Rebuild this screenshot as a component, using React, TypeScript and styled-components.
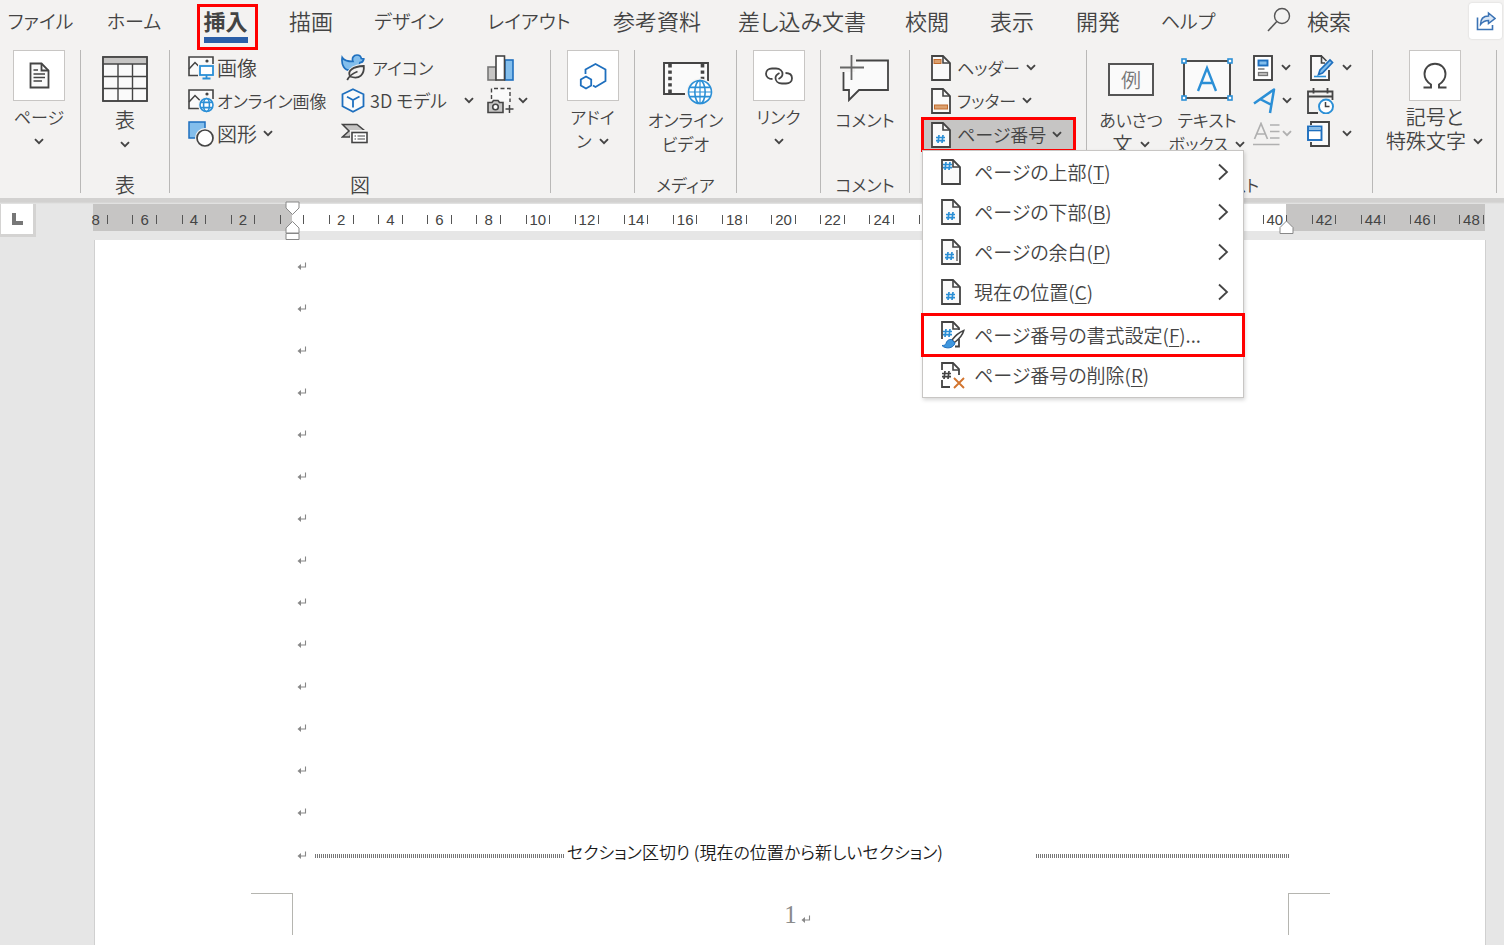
import React from "react";
import styled, { createGlobalStyle, css } from "styled-components";

const ink = "#444444";
const blue = "#2b8fd6";
const deep = "#1e6fbe";
const red = "#ff0000";

const GlobalStyle = createGlobalStyle`
  *, *::before, *::after { box-sizing: border-box; }
  body {
    margin: 0;
    background: #e6e6e6;
    color: ${ink};
    font-family: "Noto Sans CJK JP", "Noto Sans", sans-serif;
    font-weight: 350;
    font-feature-settings: "palt";
    overflow: hidden;
  }
  button {
    margin: 0;
    padding: 0;
    border: 0;
    background: none;
    color: inherit;
    font: inherit;
    font-feature-settings: inherit;
    white-space: nowrap;
  }
  svg { display: block; flex: none; fill: none; }
`;

const Window = styled.div`
  display: flex;
  flex-direction: column;
  min-height: 100vh;
`;

/* ---------- tabs ---------- */

const TabBar = styled.nav`
  display: flex;
  height: 44px;
  background: #f3f2f1;
`;

const Tab = styled.button<{ $width: number; $active?: boolean; $kana?: boolean }>`
  position: relative;
  flex: 0 0 ${(p) => p.$width}px;
  height: 44px;
  padding-bottom: ${(p) => (p.$kana ? 2 : 4)}px;
  font-size: ${(p) => (p.$kana ? 19 : 22)}px;
  line-height: 40px;
  ${(p) =>
    p.$active &&
    css`
      font-weight: 700;
      &::after {
        content: "";
        position: absolute;
        left: 50%;
        bottom: 1px;
        width: 44px;
        height: 6px;
        margin-left: -22px;
        background: #2b5fa8;
      }
    `}
`;

const Callout = styled.span`
  position: absolute;
  z-index: 2;
  top: 4px;
  left: 50%;
  width: 61px;
  height: 46px;
  margin-left: -29px;
  border: 3px solid ${red};
`;

const SearchButton = styled.button`
  display: flex;
  align-items: center;
  gap: 16px;
  margin-left: 29px;
  height: 44px;
  padding-bottom: 4px;
  font-size: 22px;
  line-height: 40px;
`;

const ShareButton = styled.button`
  display: flex;
  align-items: center;
  justify-content: center;
  width: 33px;
  height: 36px;
  margin: 3px 2px 0 auto;
  border-radius: 3px;
  background: #fff;
  box-shadow: 0 0 2px #ccc;
`;

/* ---------- ribbon ---------- */

const Ribbon = styled.div`
  display: flex;
  height: 154px;
  padding-top: 6px;
  background: #f3f2f1;
`;

const Group = styled.section<{ $width: number }>`
  position: relative;
  display: flex;
  flex-direction: column;
  flex: 0 0 ${(p) => p.$width}px;
  height: 143px;
  border-right: 1px solid #b9b8b7;
`;

const GroupBody = styled.div<{ $pad?: number; $gap?: number; $center?: boolean }>`
  display: flex;
  flex: 1;
  align-items: flex-start;
  justify-content: ${(p) => (p.$center ? "center" : "flex-start")};
  gap: ${(p) => p.$gap ?? 0}px;
  padding-left: ${(p) => p.$pad ?? 0}px;
`;

const Caption = styled.div<{ $kanji?: boolean }>`
  height: 20px;
  margin-bottom: -2px;
  font-size: ${(p) => (p.$kanji ? 20 : 17)}px;
  line-height: 20px;
  text-align: center;
`;

const BigButton = styled.button<{ $width?: number }>`
  display: flex;
  flex-direction: column;
  align-items: center;
  line-height: 24px;
  ${(p) => p.$width && css`width: ${p.$width}px;`}
`;

const IconBox = styled.span`
  display: flex;
  align-items: center;
  justify-content: center;
  width: 52px;
  height: 51px;
  margin-bottom: 4px;
  border: 1px solid #c8c6c4;
  background: #fff;
`;

const IconSlot = styled.span`
  display: flex;
  align-items: center;
  justify-content: center;
  width: 54px;
  height: 58px;
`;

const Line = styled.span<{ $size?: number }>`
  display: flex;
  align-items: center;
  justify-content: center;
  gap: 7px;
  height: 24px;
  font-size: ${(p) => p.$size ?? 17}px;
`;

const Stack = styled.div<{ $width?: number; $end?: number }>`
  display: flex;
  flex-direction: column;
  padding-top: 1px;
  padding-right: ${(p) => p.$end ?? 0}px;
  ${(p) => p.$width && css`width: ${p.$width}px;`}
`;

const SmallButton = styled.button<{ $size?: number; $gap?: number }>`
  display: flex;
  align-items: center;
  gap: ${(p) => p.$gap ?? 3}px;
  height: 33px;
  font-size: ${(p) => p.$size ?? 17}px;
  line-height: 33px;
`;

const Spread = styled.span`
  flex: 1;
`;

const Label = styled.span`
  padding-right: 3px;
`;

const MenuAnchor = styled.div`
  position: relative;
`;

const PressedButton = styled(SmallButton)`
  width: 155px;
  height: 35px;
  margin-left: -10px;
  padding-left: 7px;
  border: 3px solid ${red};
  background: #c6c5c4;
`;

/* ---------- drop-down menu ---------- */

const Menu = styled.div`
  position: absolute;
  z-index: 5;
  top: 33px;
  left: -9px;
  display: flex;
  flex-direction: column;
  width: 322px;
  padding: 1px 0 2px;
  border: 1px solid #c8c6c4;
  background: #fff;
  box-shadow: 1px 2px 4px rgba(0, 0, 0, 0.16);
`;

const MenuItem = styled.button<{ $marked?: boolean }>`
  display: flex;
  align-items: center;
  gap: 10px;
  height: 40px;
  padding: 0 14px 0 17px;
  font-size: 19px;
  line-height: 40px;
  text-align: left;
  u { text-underline-offset: 3px; text-decoration-thickness: 1px; }
  ${(p) =>
    p.$marked &&
    css`
      margin-top: 3px;
      outline: 3px solid ${red};
      outline-offset: -1px;
    `}
`;

const MenuIcon = styled.span`
  width: 24px;
  padding-left: 1px;
`;

const MenuText = styled.span`
  flex: 1;
`;

/* ---------- ruler ---------- */

const Shade = styled.div`
  height: 6px;
  background: linear-gradient(#d2d1d0, #d2d1d0 4px, #e6e6e6);
`;

const RulerRow = styled.div`
  display: flex;
  height: 36px;
`;

const TabStop = styled.button`
  display: flex;
  align-items: center;
  justify-content: center;
  width: 36px;
  height: 33px;
  margin-right: 55px;
  border: 3px solid #d4d3d2;
  border-left-width: 1px;
  border-top: 0;
  background: #fff;
`;

const RulerTrack = styled.div`
  position: relative;
  width: 1394px;
  height: 27px;
`;

const RulerClip = styled.div`
  height: 27px;
  overflow: hidden;
  background: linear-gradient(
    90deg,
    transparent 2px,
    #c6c5c4 2px,
    #c6c5c4 201px,
    #fff 201px,
    #fff 1195px,
    #c6c5c4 1195px
  );
`;

const RulerCells = styled.div`
  display: grid;
  grid-template-columns: repeat(29, 1fr);
  align-items: center;
  width: 1425px;
  height: 31px;
  margin-left: -20px;
`;

const RulerCell = styled.span`
  display: flex;
  justify-content: center;
  width: 50%;
  height: 9px;
  margin: 0 auto;
  border: solid #555;
  border-width: 0 1px;
  font-family: "Liberation Sans", sans-serif;
  font-weight: 400;
  font-size: 15px;
  line-height: 10px;
`;

const Marker = styled.svg<{ $left: number; $top: number }>`
  position: absolute;
  left: ${(p) => p.$left}px;
  top: ${(p) => p.$top}px;
`;

/* ---------- document ---------- */

const Sheet = styled.main`
  flex: 1;
  margin: 0 18px 0 94px;
  border: solid #d0d0d0;
  border-width: 0 1px;
  background: #fff;
`;

const Paragraph = styled.div`
  display: flex;
  align-items: center;
  height: 42px;
  margin: 0 196px 0 202px;
`;

const TextBody = styled.div`
  padding-top: 5px;
`;

const BreakLine = styled.span<{ $grow?: boolean }>`
  flex: ${(p) => (p.$grow ? "1" : "0 0 250px")};
  height: 4px;
  margin-top: 3px;
  background: repeating-linear-gradient(90deg, #777 0, #777 1px, #fff 1px, #fff 2px);
`;

const BreakText = styled.span`
  width: 471px;
  padding: 0 0 4px 2px;
  color: #1a1a1a;
  font-size: 17px;
  line-height: 26px;
  white-space: nowrap;
`;

const MarkSpace = styled.span`
  width: 18px;
  padding-top: 2px;
`;

const Footer = styled.div`
  display: flex;
  justify-content: space-between;
  margin: 18px 155px 0 156px;
`;

const Crop = styled.span<{ $side: "left" | "right" }>`
  width: 42px;
  height: 42px;
  border-top: 1px solid #b5b5b0;
  ${(p) => (p.$side === "left" ? "border-right" : "border-left")}: 1px solid #b5b5b0;
`;

const PageNumber = styled.span`
  display: flex;
  align-items: center;
  gap: 4px;
  padding-left: 14px;
  color: #8a8a8a;
  font-family: "Liberation Serif", serif;
  font-size: 25px;
  line-height: 44px;
  svg { margin-top: 8px; }
`;

/* ---------- icons ---------- */

const Chevron = ({ faint }: { faint?: boolean }) => (
  <svg width="10" height="7" viewBox="0 0 10 7">
    <path d="M1 1.2 5 5.2 9 1.2" stroke={faint ? "#b0b0b0" : "#444"} strokeWidth="1.9" />
  </svg>
);

const ChevronRight = () => (
  <svg width="12" height="18" viewBox="0 0 12 18">
    <path d="M2 1.5 10 9 2 16.5" stroke="#444" strokeWidth="1.8" />
  </svg>
);

const SearchIcon = () => (
  <svg width="24" height="26" viewBox="0 0 24 26">
    <circle cx="15" cy="9" r="7.5" stroke="#555" strokeWidth="1.4" />
    <path d="M9.8 14.5 1 24" stroke="#555" strokeWidth="1.6" />
  </svg>
);

const ShareIcon = () => (
  <svg width="20" height="20" viewBox="0 0 20 20" stroke="#3b73b5" strokeWidth="1.6">
    <path d="M1.5 6.500V18.500H16.500V14" />
    <path
      d="M4.500 13.500C4.500 8 7 5 12.500 5V2L19 7.500 12.500 12.500V9.500C9 9.500 6.500 11 4.500 13.500Z"
      fill="#d9e6f5"
      strokeWidth="1.5"
    />
  </svg>
);

const PageIcon = () => (
  <svg width="21" height="27" viewBox="0 0 21 27" stroke="#444" strokeWidth="1.8">
    <path d="M1.5 1.5H12.5L19.5 8.5V25.5H1.5Z" fill="#fafafa" />
    <path d="M12.5 1.5V8.5H19.5" />
    <path d="M4.5 8H9M4.5 12H16M4.5 15.5H16M4.5 19H13" strokeWidth="1.3" />
  </svg>
);

const TableIcon = () => (
  <svg width="46" height="46" viewBox="0 0 46 46" stroke="#444">
    <rect x="1" y="1" width="44" height="44" fill="#fafafa" />
    <rect x="1" y="1" width="44" height="7" fill="#c6c5c4" stroke="none" />
    <path d="M1 8H45M1 20.5H45M1 32.5H45M16 8V45M30.5 8V45" strokeWidth="1.4" />
    <rect x="1" y="1" width="44" height="44" strokeWidth="1.8" />
  </svg>
);

const PictureBase = () => (
  <>
    <path d="M11 19.5H1V1H25V10" stroke="#444" strokeWidth="1.6" fill="#fafafa" />
    <path d="M1 13 7 6.5 12 11.5" stroke="#444" strokeWidth="1.5" />
    <circle cx="19" cy="5" r="1.6" fill="#444" />
  </>
);

const ImageIcon = () => (
  <svg width="26" height="24" viewBox="0 0 26 24">
    <PictureBase />
    <path d="M10 8H26V22H10Z" fill="#f3f2f1" />
    <rect x="12" y="10" width="13" height="9" fill="#fff" stroke={blue} strokeWidth="1.8" />
    <path d="M18.5 19V22M14.5 22.5H22.5" stroke={blue} strokeWidth="1.8" />
  </svg>
);

const Globe = ({ cx, cy, r }: { cx: number; cy: number; r: number }) => (
  <g stroke={blue} strokeWidth="1.6">
    <circle cx={cx} cy={cy} r={r + 2} fill="#f3f2f1" stroke="none" />
    <circle cx={cx} cy={cy} r={r} fill="#fff" />
    <ellipse cx={cx} cy={cy} rx={r * 0.45} ry={r} />
    <path
      d={`M${cx - r * 0.88} ${cy - r * 0.4}H${cx + r * 0.88}M${cx - r * 0.88} ${cy + r * 0.4}H${cx + r * 0.88}`}
    />
  </g>
);

const OnlineImageIcon = () => (
  <svg width="26" height="24" viewBox="0 0 26 24">
    <PictureBase />
    <Globe cx={18.5} cy={16} r={6.5} />
  </svg>
);

const ShapesIcon = () => (
  <svg width="26" height="26" viewBox="0 0 26 26">
    <rect x="1" y="1" width="16" height="16" fill="#83beec" stroke={deep} strokeWidth="1.5" />
    <circle cx="17" cy="17" r="10" fill="#f3f2f1" />
    <circle cx="17" cy="17" r="8" fill="#fff" stroke="#444" strokeWidth="1.7" />
  </svg>
);

const DuckIcon = () => (
  <svg width="26" height="27" viewBox="0 0 26 27">
    <path
      d="M1.2 3.500C3 6.500 7 7.500 12 7.500 10.500 4 12.500 1 16 1 18.500 1 20 2.500 20.300 4.500L22.800 5C22.300 7.500 20.500 8.500 19 8.500 18.500 13 15 16.500 9 16.500 3.500 16.500 0 11 1.200 3.500Z"
      fill="#83beec"
      stroke={deep}
      strokeWidth="1.7"
    />
    <path d="M4 27C4 16 11 9.500 25 9.500V18C23 25 15 27 4 27Z" fill="#f3f2f1" />
    <path
      d="M9 22.500C6 16.500 12 12.500 22.800 12 23.500 20 19 26 9 22.500ZM6.200 26C8.500 21.500 12.500 19 16.500 17.500"
      stroke="#444"
      strokeWidth="1.8"
    />
  </svg>
);

const CubeIcon = () => (
  <svg width="24" height="25" viewBox="0 0 24 25" stroke={deep} strokeWidth="1.8">
    <path d="M12 1.2 22.500 6.200V18.200L12 23.800 1.500 18.200V6.200Z" fill="#fafafa" />
    <path d="M6 8.800 12 12 18.500 8.500M12 12V19.500" />
  </svg>
);

const SmartArtIcon = () => (
  <svg width="27" height="21" viewBox="0 0 27 21">
    <path d="M1.5 1.5H16L24 8H11L9 14H1.5L8 8Z" fill="#c6c5c4" stroke="#444" strokeWidth="1.5" />
    <rect x="9" y="7" width="18" height="14" fill="#f3f2f1" />
    <rect x="11" y="9.5" width="15" height="10" fill="#fff" stroke="#444" strokeWidth="1.6" />
    <path d="M13.5 13H15M16.5 13H24M13.5 16H15M16.5 16H24" stroke="#444" strokeWidth="1.2" />
  </svg>
);

const ChartIcon = () => (
  <svg width="27" height="26" viewBox="0 0 27 26" strokeWidth="1.6">
    <rect x="1" y="12" width="8" height="13" fill="#c6c5c4" stroke="#777" />
    <rect x="18" y="5" width="8" height="20" fill="#83beec" stroke={deep} />
    <rect x="9" y="1" width="8.5" height="24" fill="#fff" stroke="#444" />
  </svg>
);

const ScreenshotIcon = () => (
  <svg width="27" height="27" viewBox="0 0 27 27" stroke="#444">
    <path d="M4.5 12V1.5H23V15" strokeWidth="1.4" strokeDasharray="4 2.5" fill="#fafafa" />
    <path d="M1 15.5H5L6.5 13.5H11L12.5 15.5H16V25.5H1Z" fill="#c6c5c4" strokeWidth="1.6" />
    <circle cx="8.5" cy="20" r="2.8" strokeWidth="1.6" fill="#fff" />
    <path d="M22.5 18V26M18.5 22H26.5" strokeWidth="1.5" />
  </svg>
);

const AddInIcon = () => (
  <svg width="28" height="28" viewBox="0 0 28 28" stroke={deep} strokeWidth="1.8">
    <path d="M6.500 12V7.500L16.500 2 26.500 7.500V19L16.500 25 14 23.500" />
    <path d="M7 14.500 12.200 17.500V23.500L7 26.500 1.800 23.500V17.500Z" />
  </svg>
);

const VideoIcon = () => (
  <svg width="54" height="52" viewBox="-4 -8 54 52">
    <rect x="1" y="2" width="44" height="31" fill="#fafafa" />
    <path d="M22 33H1V2H45V20" stroke="#444" strokeWidth="1.9" />
    <path d="M7 3V33M39.5 3V20" stroke="#444" strokeWidth="3.6" strokeDasharray="3.4 3" />
    <Globe cx={37} cy={31} r={11.5} />
    <path d="M37 19.5V42.5M26 31H48" stroke={blue} strokeWidth="1.2" />
  </svg>
);

const LinkIcon = () => (
  <svg width="28" height="18" viewBox="0 0 28 18" stroke="#444" strokeWidth="1.8">
    <path d="M7.5 12C3.5 12 1 10 1 6.8S3.5 1.5 7 1.5H11C15 1.5 17.5 4 17.5 7S15.5 11 13.5 12" />
    <path d="M20.5 6C24.5 6 27 8 27 11.2S24.5 16.5 21 16.5H17C13 16.5 10.5 14 10.5 11S12.5 7 14.5 6" />
  </svg>
);

const CommentIcon = () => (
  <svg width="50" height="48" viewBox="1 1 50 48">
    <path d="M17 6.5H49V36H20L10 46V36H4.500V17" fill="#fafafa" stroke="#444" strokeWidth="1.8" />
    <path d="M3 5H16V18H3Z" fill="#f3f2f1" />
    <path d="M12.5 1V26M1 13.5H25" stroke="#666" strokeWidth="1.8" />
  </svg>
);

const DocShape = () => (
  <>
    <path d="M1 1H12L19 8V25H1Z" fill="#fafafa" stroke="#444" strokeWidth="1.8" />
    <path d="M12 1V8H19" stroke="#444" strokeWidth="1.6" />
  </>
);

const Hash = ({ x, y, color = blue }: { x: number; y: number; color?: string }) => (
  <path
    d={`M${x + 3} ${y}L${x + 2} ${y + 8}M${x + 7} ${y}L${x + 6} ${y + 8}M${x} ${y + 2.5}H${x + 9}M${x} ${y + 5.7}H${x + 9}`}
    stroke={color}
    strokeWidth="1.7"
  />
);

const HeaderIcon = () => (
  <svg width="20" height="26" viewBox="0 0 20 26">
    <DocShape />
    <rect x="3" y="4.5" width="7" height="4" fill="#dba06e" stroke="#c06a2c" />
  </svg>
);

const FooterIcon = () => (
  <svg width="20" height="26" viewBox="0 0 20 26">
    <DocShape />
    <rect x="3.5" y="17" width="13" height="4" fill="#dba06e" stroke="#c06a2c" />
  </svg>
);

const NumberIcon = ({ x = 5, y = 13, bar = false }: { x?: number; y?: number; bar?: boolean }) => (
  <svg width="20" height="26" viewBox="0 0 20 26">
    <DocShape />
    <Hash x={x} y={y} />
    {bar && <path d="M16 11V22" stroke="#444" strokeWidth="1.2" />}
  </svg>
);

const FormatNumberIcon = () => (
  <svg width="24" height="28" viewBox="0 0 24 28">
    <path d="M1 18V1H12L18 7V9M18 18V25.500H14" stroke="#444" strokeWidth="1.8" />
    <path d="M12 1V8H18" stroke="#444" strokeWidth="1.6" />
    <Hash x={2} y={8} />
    <path
      d="M22.800 9.500C18 11.500 14 15 11 19L13.500 21.500C17.500 18.500 21.500 14.500 22.800 9.500Z"
      fill="#fff"
      stroke="#444"
      strokeWidth="1.5"
    />
    <path
      d="M10.500 18.500C7 18 5.500 20.500 5 22.500 4.500 24 3 24.500 1 24.500 4 28 12.500 28 14 22Z"
      fill="#3f97de"
      stroke={deep}
      strokeWidth="1"
    />
  </svg>
);

const RemoveNumberIcon = () => (
  <svg width="24" height="27" viewBox="0 0 24 27">
    <path d="M1 8V1H12L18 7V13M1 18V25H9" stroke="#444" strokeWidth="1.8" />
    <path d="M12 1V8H18" stroke="#444" strokeWidth="1.6" />
    <Hash x={1} y={9} color="#444" />
    <path d="M13 16 23 26M23 16 13 26" stroke="#d2742e" strokeWidth="1.9" />
  </svg>
);

const GreetingFrame = styled.span`
  display: flex;
  align-items: center;
  justify-content: center;
  width: 46px;
  height: 33px;
  border: 2px solid #555;
  background: #fafafa;
  color: #777;
  font-size: 20px;
  line-height: 29px;
`;

const TextBoxIcon = () => (
  <svg width="52" height="43" viewBox="0 0 52 43">
    <rect x="3" y="3" width="46" height="37" fill="#fafafa" stroke="#444" strokeWidth="1.9" />
    <path d="M17 33 26 10 35 33M20 25H32" stroke={blue} strokeWidth="2.4" />
    <g fill="#fff" stroke={blue} strokeWidth="1.6">
      <rect x="1" y="1" width="4" height="4" />
      <rect x="47" y="1" width="4" height="4" />
      <rect x="1" y="38" width="4" height="4" />
      <rect x="47" y="38" width="4" height="4" />
    </g>
  </svg>
);

const QuickPartsIcon = () => (
  <svg width="20" height="26" viewBox="0 0 20 26">
    <rect x="1" y="1" width="18" height="24" fill="#fff" stroke="#444" strokeWidth="1.9" />
    <rect x="5.5" y="5.5" width="9" height="5" fill="#83beec" stroke={deep} strokeWidth="1.9" />
    <path d="M5 14H11.500" stroke="#777" strokeWidth="1.5" />
    <rect x="5.5" y="17.5" width="9" height="3" fill="#c6c5c4" stroke="#777" strokeWidth="1.3" />
  </svg>
);

const WordArtIcon = () => (
  <svg width="24" height="26" viewBox="0 0 24 26">
    <path d="M1 15.500 21 1.500 17 25M7 11 18.500 17" stroke={blue} strokeWidth="2.5" strokeLinejoin="round" />
  </svg>
);

const DropCapIcon = () => (
  <svg width="27" height="24" viewBox="0 0 27 24" stroke="#b0b0b0" strokeWidth="1.7">
    <path d="M1.5 17 8 1.5 14.500 17M4 12H12M17 3H26.5M17 9.5H26.5M17 16H26.5M0 22.5H26.5" />
  </svg>
);

const SignatureIcon = () => (
  <svg width="27" height="26" viewBox="-3 0 27 26">
    <path d="M12 1H1V25H19V15" fill="#fafafa" stroke="#444" strokeWidth="1.9" />
    <path d="M11.500 1V8H15M11.500 1 16.500 6" stroke="#444" strokeWidth="1.6" />
    <path d="M8.500 19.500 10 15 20 5 22.500 7.500 12.500 18Z" fill="#83beec" stroke={deep} strokeWidth="1.7" />
    <path d="M4 21.500H16" stroke={blue} strokeWidth="1.6" />
  </svg>
);

const DateIcon = () => (
  <svg width="27" height="26" viewBox="0 0 27 26">
    <path
      d="M11 25H1V3.500H25.500V12M1 8.500H25.500M6.500 0V5.500M20.500 0V5.500"
      stroke="#444"
      strokeWidth="1.8"
    />
    <circle cx="19" cy="18.5" r="7" fill="#fff" stroke={blue} strokeWidth="1.9" />
    <path d="M18.500 14V18.500H22.500" stroke="#444" strokeWidth="1.5" />
  </svg>
);

const ObjectIcon = () => (
  <svg width="24" height="26" viewBox="0 0 24 26">
    <path d="M4 4V1H22V25H4V21" fill="#fafafa" stroke="#444" strokeWidth="1.9" />
    <rect x="1" y="5.5" width="13.5" height="13.5" fill="#fff" stroke={deep} strokeWidth="1.9" />
    <path d="M2 7.500H13.500" stroke="#83beec" strokeWidth="2" />
    <path d="M1 9.500H14.500" stroke={deep} strokeWidth="1.6" />
  </svg>
);

const OmegaIcon = () => (
  <svg width="26" height="28" viewBox="0 0 26 28" stroke="#444" strokeWidth="1.9">
    <path d="M1.5 25.5H9V22.5C5 20 2.5 16.5 2.5 12 2.5 6 7 1.8 13 1.8S23.5 6 23.5 12C23.5 16.5 21 20 17 22.5V25.5H24.5" />
  </svg>
);

const ReturnMark = () => (
  <svg width="10" height="9" viewBox="0 0 10 9">
    <path d="M8.5 0.5V5H2" stroke="#888" strokeWidth="1.1" />
    <path d="M0.5 5 4 2V8Z" fill="#888" />
  </svg>
);

/* ---------- data ---------- */

const tabs = [
  { label: "ファイル", width: 81, kana: true },
  { label: "ホーム", width: 106, kana: true },
  { label: "挿入", width: 77, active: true },
  { label: "描画", width: 94 },
  { label: "デザイン", width: 102, kana: true },
  { label: "レイアウト", width: 138, kana: true },
  { label: "参考資料", width: 118 },
  { label: "差し込み文書", width: 172 },
  { label: "校閲", width: 78 },
  { label: "表示", width: 92 },
  { label: "開発", width: 80 },
  { label: "ヘルプ", width: 100, kana: true },
];

const rulerNumbers = [8, 6, 4, 2, 0, ...Array.from({ length: 24 }, (_, i) => (i + 1) * 2)];

const positions = [
  { text: "ページの上部", key: "T", icon: <NumberIcon x={2} y={3} /> },
  { text: "ページの下部", key: "B", icon: <NumberIcon /> },
  { text: "ページの余白", key: "P", icon: <NumberIcon x={4} bar /> },
  { text: "現在の位置", key: "C", icon: <NumberIcon /> },
];

export default function App() {
  return (
    <Window>
      <GlobalStyle />
      <TabBar>
        {tabs.map((t) => (
          <Tab key={t.label} $width={t.width} $active={t.active} $kana={t.kana}>
            {t.label}
            {t.active && <Callout />}
          </Tab>
        ))}
        <SearchButton>
          <SearchIcon />
          検索
        </SearchButton>
        <ShareButton aria-label="共有">
          <ShareIcon />
        </ShareButton>
      </TabBar>

      <Ribbon>
        <Group $width={81}>
          <GroupBody $pad={13}>
            <BigButton>
              <IconBox><PageIcon /></IconBox>
              <Line>ページ</Line>
              <Line><Chevron /></Line>
            </BigButton>
          </GroupBody>
        </Group>

        <Group $width={89}>
          <GroupBody $center>
            <BigButton>
              <IconSlot><TableIcon /></IconSlot>
              <Line $size={20}>表</Line>
              <Line><Chevron /></Line>
            </BigButton>
          </GroupBody>
          <Caption $kanji>表</Caption>
        </Group>

        <Group $width={381}>
          <GroupBody $pad={18}>
            <Stack $width={153}>
              <SmallButton $size={20}><ImageIcon />画像</SmallButton>
              <SmallButton><OnlineImageIcon />オンライン画像</SmallButton>
              <SmallButton $size={20}><ShapesIcon /><Label>図形</Label><Chevron /></SmallButton>
            </Stack>
            <Stack $width={146} $end={13}>
              <SmallButton $gap={5}><DuckIcon />アイコン</SmallButton>
              <SmallButton $gap={5} $size={18}><CubeIcon />3D モデル<Spread /><Chevron /></SmallButton>
              <SmallButton aria-label="SmartArt"><SmartArtIcon /></SmallButton>
            </Stack>
            <Stack>
              <SmallButton aria-label="グラフ"><ChartIcon /></SmallButton>
              <SmallButton $gap={4} aria-label="スクリーンショット"><ScreenshotIcon /><Chevron /></SmallButton>
            </Stack>
          </GroupBody>
          <Caption $kanji>図</Caption>
        </Group>

        <Group $width={84}>
          <GroupBody $center>
            <BigButton>
              <IconBox><AddInIcon /></IconBox>
              <Line>アドイ</Line>
              <Line>ン<Chevron /></Line>
            </BigButton>
          </GroupBody>
        </Group>

        <Group $width={102}>
          <GroupBody $center>
            <BigButton>
              <IconSlot><VideoIcon /></IconSlot>
              <Line>オンライン</Line>
              <Line>ビデオ</Line>
            </BigButton>
          </GroupBody>
          <Caption>メディア</Caption>
        </Group>

        <Group $width={84}>
          <GroupBody $center>
            <BigButton>
              <IconBox><LinkIcon /></IconBox>
              <Line>リンク</Line>
              <Line><Chevron /></Line>
            </BigButton>
          </GroupBody>
        </Group>

        <Group $width={89}>
          <GroupBody $center>
            <BigButton>
              <IconSlot><CommentIcon /></IconSlot>
              <Line>コメント</Line>
            </BigButton>
          </GroupBody>
          <Caption>コメント</Caption>
        </Group>

        <Group $width={177}>
          <GroupBody $pad={21}>
            <Stack>
              <SmallButton $gap={6}><HeaderIcon />ヘッダー<Chevron /></SmallButton>
              <SmallButton $gap={6}><FooterIcon />フッター<Chevron /></SmallButton>
              <MenuAnchor>
                <PressedButton $gap={6} $size={18} aria-expanded="true">
                  <NumberIcon />ページ番号<Chevron />
                </PressedButton>
                <Menu role="menu">
                  {positions.map((p) => (
                    <MenuItem key={p.key} role="menuitem">
                      <MenuIcon>{p.icon}</MenuIcon>
                      <MenuText>{p.text}(<u>{p.key}</u>)</MenuText>
                      <ChevronRight />
                    </MenuItem>
                  ))}
                  <MenuItem role="menuitem" $marked>
                    <MenuIcon><FormatNumberIcon /></MenuIcon>
                    <MenuText>ページ番号の書式設定(<u>F</u>)...</MenuText>
                  </MenuItem>
                  <MenuItem role="menuitem">
                    <MenuIcon><RemoveNumberIcon /></MenuIcon>
                    <MenuText>ページ番号の削除(<u>R</u>)</MenuText>
                  </MenuItem>
                </Menu>
              </MenuAnchor>
            </Stack>
          </GroupBody>
        </Group>

        <Group $width={286}>
          <GroupBody $pad={14} $gap={12}>
            <BigButton $width={60}>
              <IconSlot><GreetingFrame>例</GreetingFrame></IconSlot>
              <Line>あいさつ</Line>
              <Line $size={20}>文<Chevron /></Line>
            </BigButton>
            <BigButton $width={68}>
              <IconSlot><TextBoxIcon /></IconSlot>
              <Line>テキスト</Line>
              <Line>ボックス<Chevron /></Line>
            </BigButton>
            <Stack $width={42}>
              <SmallButton $gap={8} aria-label="クイック パーツ"><QuickPartsIcon /><Chevron /></SmallButton>
              <SmallButton $gap={5} aria-label="ワードアート"><WordArtIcon /><Chevron /></SmallButton>
              <SmallButton $gap={2} aria-label="ドロップ キャップ"><DropCapIcon /><Chevron faint /></SmallButton>
            </Stack>
            <Stack $width={45}>
              <SmallButton aria-label="署名欄"><SignatureIcon /><Spread /><Chevron /></SmallButton>
              <SmallButton aria-label="日付と時刻"><DateIcon /></SmallButton>
              <SmallButton aria-label="オブジェクト"><ObjectIcon /><Spread /><Chevron /></SmallButton>
            </Stack>
          </GroupBody>
          <Caption>テキスト</Caption>
        </Group>

        <Group $width={124}>
          <GroupBody $center>
            <BigButton>
              <IconBox><OmegaIcon /></IconBox>
              <Line $size={20}>記号と</Line>
              <Line $size={20}>特殊文字<Chevron /></Line>
            </BigButton>
          </GroupBody>
        </Group>
      </Ribbon>

      <Shade />
      <RulerRow>
        <TabStop aria-label="タブの種類">
          <svg width="11" height="12" viewBox="0 0 11 12">
            <path d="M2 0V10H11" stroke="#777" strokeWidth="4" />
          </svg>
        </TabStop>
        <RulerTrack>
          <RulerClip>
            <RulerCells>
              {rulerNumbers.map((n, i) => (
                <RulerCell key={i}>{n || ""}</RulerCell>
              ))}
            </RulerCells>
          </RulerClip>
          <Marker $left={194} $top={-3} width="15" height="40" viewBox="0 0 15 40">
            <path
              d="M1 1H14V7L7.5 13.5 1 7Z M7.5 20.5 14 27V32H1V27Z M1 32.5H14V38.5H1Z"
              fill="#fff"
              stroke="#888"
            />
          </Marker>
          <Marker $left={1188} $top={16} width="15" height="15" viewBox="0 0 15 15">
            <path d="M7.5 1 14 7.5V13.5H1V7.5Z" fill="#fff" stroke="#888" />
          </Marker>
        </RulerTrack>
      </RulerRow>

      <Sheet>
        <TextBody>
          {Array.from({ length: 14 }, (_, i) => (
            <Paragraph key={i}><ReturnMark /></Paragraph>
          ))}
          <Paragraph>
            <MarkSpace><ReturnMark /></MarkSpace>
            <BreakLine />
            <BreakText>セクション区切り (現在の位置から新しいセクション)</BreakText>
            <BreakLine $grow />
          </Paragraph>
        </TextBody>
        <Footer>
          <Crop $side="left" />
          <PageNumber>1<ReturnMark /></PageNumber>
          <Crop $side="right" />
        </Footer>
      </Sheet>
    </Window>
  );
}
